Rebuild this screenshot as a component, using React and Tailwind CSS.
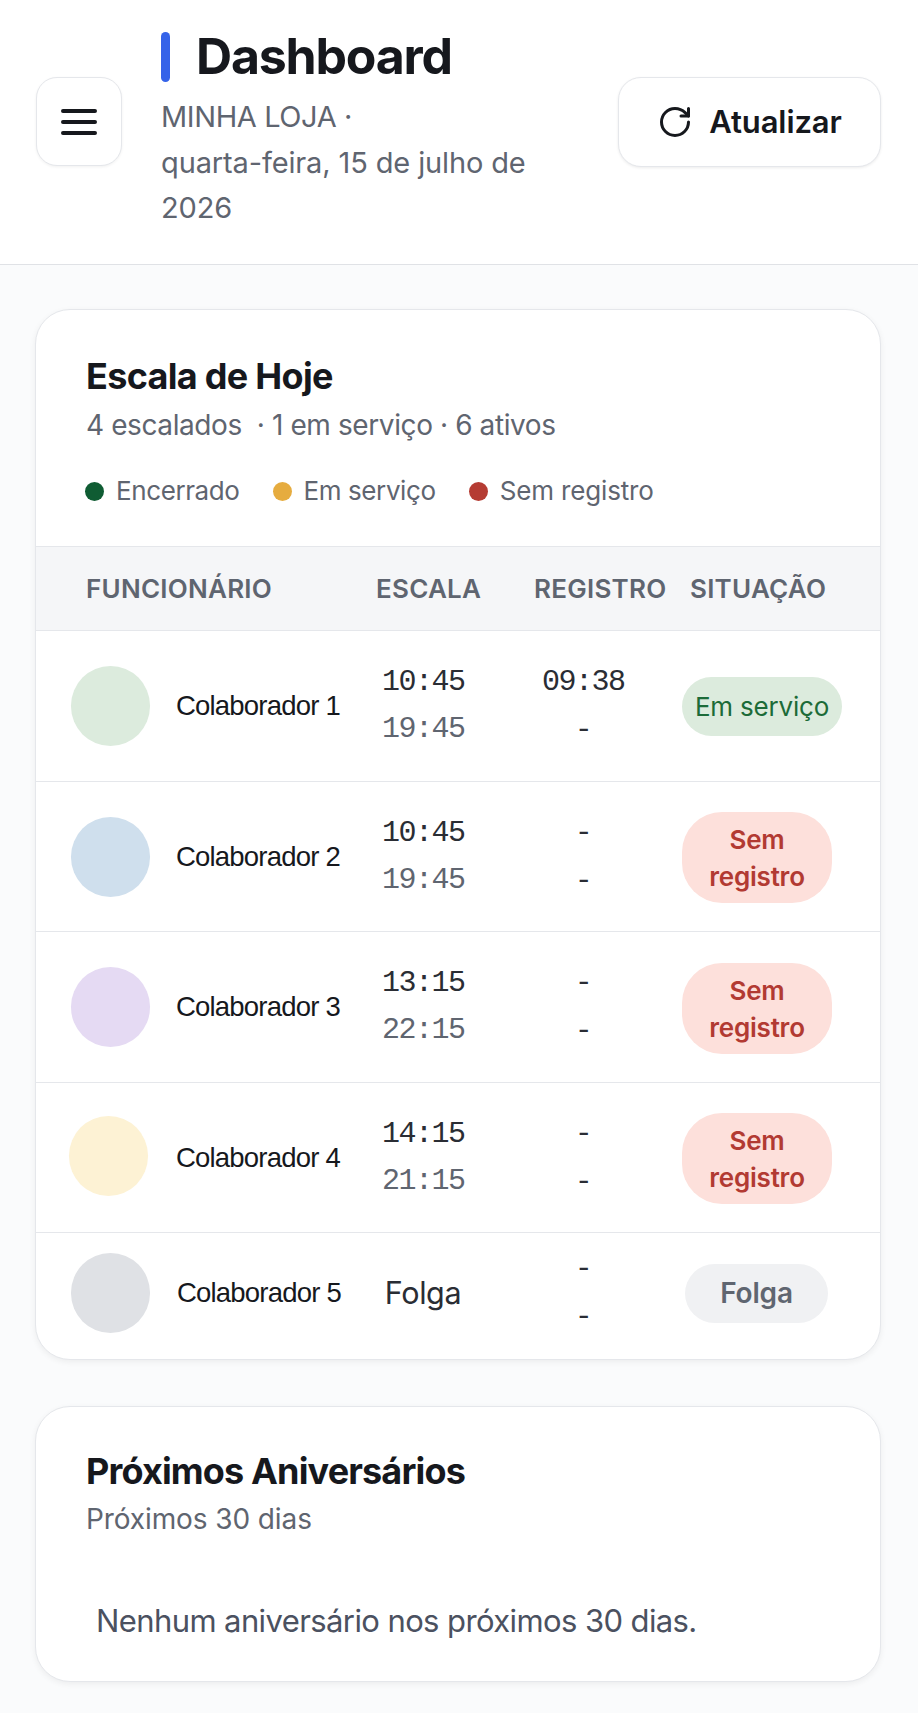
import { RotateCw } from 'lucide-react';

const SANS = 'font-[Inter,"Noto_Sans",sans-serif]';

const PILLS = {
    servico: 'w-[160px] h-[59px] bg-[#dcebdd] text-[#1c6b38] font-normal text-[26px]',
    sem: 'w-[150px] h-[91px] mt-[2px] pt-[1px] bg-[#fde0db] text-[#b23a32] font-semibold text-[26px]',
    folga: 'w-[143px] h-[59px] ml-[3px] mt-[2px] bg-[#f0f1f3] text-[#5f6570] font-semibold text-[28px]',
};

const ROWS = [
    { name: 'Colaborador 1', avatar: 'bg-[#dcebdd]', start: '10:45', end: '19:45', in: '09:38', out: '-', pill: 'servico', label: 'Em serviço', h: 'h-[151px]', pad: 'pl-[35px] gap-[26px]' },
    { name: 'Colaborador 2', avatar: 'bg-[#cfdfed]', start: '10:45', end: '19:45', in: '-', out: '-', pill: 'sem', label: 'Sem registro', h: 'h-[150px]', pad: 'pl-[35px] gap-[26px]' },
    { name: 'Colaborador 3', avatar: 'bg-[#e5daf3]', start: '13:15', end: '22:15', in: '-', out: '-', pill: 'sem', label: 'Sem registro', h: 'h-[151px]', pad: 'pl-[35px] gap-[26px]' },
    { name: 'Colaborador 4', avatar: 'bg-[#fdf2d4] mb-[3px]', start: '14:15', end: '21:15', in: '-', out: '-', pill: 'sem', label: 'Sem registro', h: 'h-[150px]', pad: 'pl-[33px] gap-[28px]' },
    { name: 'Colaborador 5', avatar: 'bg-[#dfe1e5]', off: true, in: '-', out: '-', pill: 'folga', label: 'Folga', h: 'h-[126px] pb-[7px]', pad: 'pl-[35px] gap-[27px]' },
];

function MenuIcon() {
    return (
        <svg width="36" height="28" viewBox="0 0 36 28" fill="none" stroke="#16181d" strokeWidth="4" strokeLinecap="round">
            <path d="M2 3h32M2 14h32M2 25h32" />
        </svg>
    );
}

function Legend({ dot, children, track = 'tracking-[-0.4px]' }) {
    return (
        <div className="flex items-center gap-[12px]">
            <span className={`h-[19px] w-[19px] rounded-full ${dot}`} />
            <span className={`text-[26px] leading-[32px] text-[#5f6570] ${track}`}>{children}</span>
        </div>
    );
}

function Row({ r }) {
    return (
        <div className={`grid grid-cols-[346px_160px_140px_1fr] items-center border-b border-[#e5e7eb] last:border-b-0 ${r.h}`}>
            <div className={`flex items-center ${r.pad}`}>
                <span className={`h-[80px] w-[79px] shrink-0 rounded-full ${r.avatar}`} />
                <span className="font-['Liberation_Sans',sans-serif] text-[27.5px] tracking-[-0.8px] whitespace-nowrap text-[#16181d]">{r.name}</span>
            </div>
            {r.off ? (
                <div className="w-[82px] text-center text-[30.5px] tracking-[-0.4px] text-[#2a2d34]">Folga</div>
            ) : (
                <div className="w-[82px] text-center font-['Liberation_Mono',monospace] text-[30px] tracking-[-1.5px] leading-[47px]">
                    <div className="text-[#2a2d34]">{r.start}</div>
                    <div className="text-[#5f6570]">{r.end}</div>
                </div>
            )}
            <div className="w-[82px] text-center font-['Liberation_Mono',monospace] text-[30px] tracking-[-1.5px] leading-[48px] text-[#2a2d34]">
                <div>{r.in}</div>
                <div>{r.out}</div>
            </div>
            <div className={`flex items-center justify-center rounded-[40px] px-[8px] text-center leading-[37px] tracking-[-0.2px] ${PILLS[r.pill]}`}>
                {r.label}
            </div>
        </div>
    );
}

export default function App() {
    return (
        <div className={`min-h-[1713px] bg-[#fafbfc] ${SANS}`}>
            <header className="flex h-[265px] items-start border-b border-[#e0e2e6] bg-white pl-[36px] pr-[37px]">
                <button className="mt-[77px] flex h-[89px] w-[86px] shrink-0 items-center justify-center rounded-[21px] border border-[#e5e7eb] bg-white shadow-[0_1px_3px_rgba(0,0,0,0.06)]">
                    <MenuIcon />
                </button>
                <div className="ml-[39px] w-[380px] pt-[32px]">
                    <div className="flex items-center gap-[26px]">
                        <span className="h-[50px] w-[9px] rounded-full bg-[#3563e9]" />
                        <h1 className="-mt-[2px] text-[50px] leading-[50px] font-bold tracking-[-1.2px] text-[#16181d]">Dashboard</h1>
                    </div>
                    <p className="mt-[12px] text-[29px] leading-[45.5px] tracking-[-0.13px] text-[#5f6570]">
                        <span className="tracking-[-0.4px]">MINHA LOJA ·</span><br />quarta-feira, 15 de julho de 2026
                    </p>
                </div>
                <button className="mt-[77px] ml-auto flex h-[90px] w-[263px] items-center justify-center gap-[16px] rounded-[23px] border border-[#e5e7eb] bg-white shadow-[0_1px_3px_rgba(0,0,0,0.08)]">
                    <RotateCw className="h-[36px] w-[36px] text-[#16181d]" strokeWidth={2} />
                    <span className="text-[31px] font-semibold tracking-[-0.1px] text-[#16181d]">Atualizar</span>
                </button>
            </header>

            <main className="flex flex-col gap-[46px] pt-[44px] pr-[37px] pl-[35px]">
                <section className="overflow-hidden rounded-[35px] border border-[#e5e7eb] bg-white shadow-[0_2px_6px_rgba(0,0,0,0.06)]">
                    <div className="h-[236px] pt-[44px] pl-[50px]">
                        <h2 className="text-[36px] leading-[44px] font-bold tracking-[-0.7px] text-[#16181d]">Escala de Hoje</h2>
                        <p className="mt-[9px] text-[28px] leading-[36px] tracking-[-0.4px] text-[#5f6570]">4 escalados &nbsp;· 1 em serviço · 6 ativos</p>
                        <div className="mt-[32px] -ml-[1px] flex gap-[33px]">
                            <Legend dot="bg-[#0f5c33]">Encerrado</Legend>
                            <Legend dot="bg-[#e6ac3f]">Em serviço</Legend>
                            <Legend dot="bg-[#b53c33]" track="tracking-[-0.15px]">Sem registro</Legend>
                        </div>
                    </div>
                    <div className="grid h-[85px] grid-cols-[340px_158px_156px_1fr] items-center border-y border-[#e5e7eb] bg-[#f5f6f8] text-[26px] font-semibold tracking-[0.25px] text-[#5f6570]">
                        <span className="pl-[50px]">FUNCIONÁRIO</span>
                        <span>ESCALA</span>
                        <span>REGISTRO</span>
                        <span>SITUAÇÃO</span>
                    </div>
                    {ROWS.map((r) => <Row key={r.name} r={r} />)}
                </section>

                <section className="h-[276px] rounded-[35px] border border-[#e5e7eb] bg-white pt-[42px] pl-[50px] shadow-[0_2px_6px_rgba(0,0,0,0.06)]">
                    <h2 className="text-[36px] leading-[44px] font-bold tracking-[-0.85px] text-[#16181d]">Próximos Aniversários</h2>
                    <p className="mt-[8px] text-[28px] leading-[36px] tracking-[-0.1px] text-[#5f6570]">Próximos 30 dias</p>
                    <p className="mt-[64px] pl-[10px] text-[31px] leading-[40px] tracking-[-0.6px] text-[#4b5160]">Nenhum aniversário nos próximos 30 dias.</p>
                </section>
            </main>
        </div>
    );
}
